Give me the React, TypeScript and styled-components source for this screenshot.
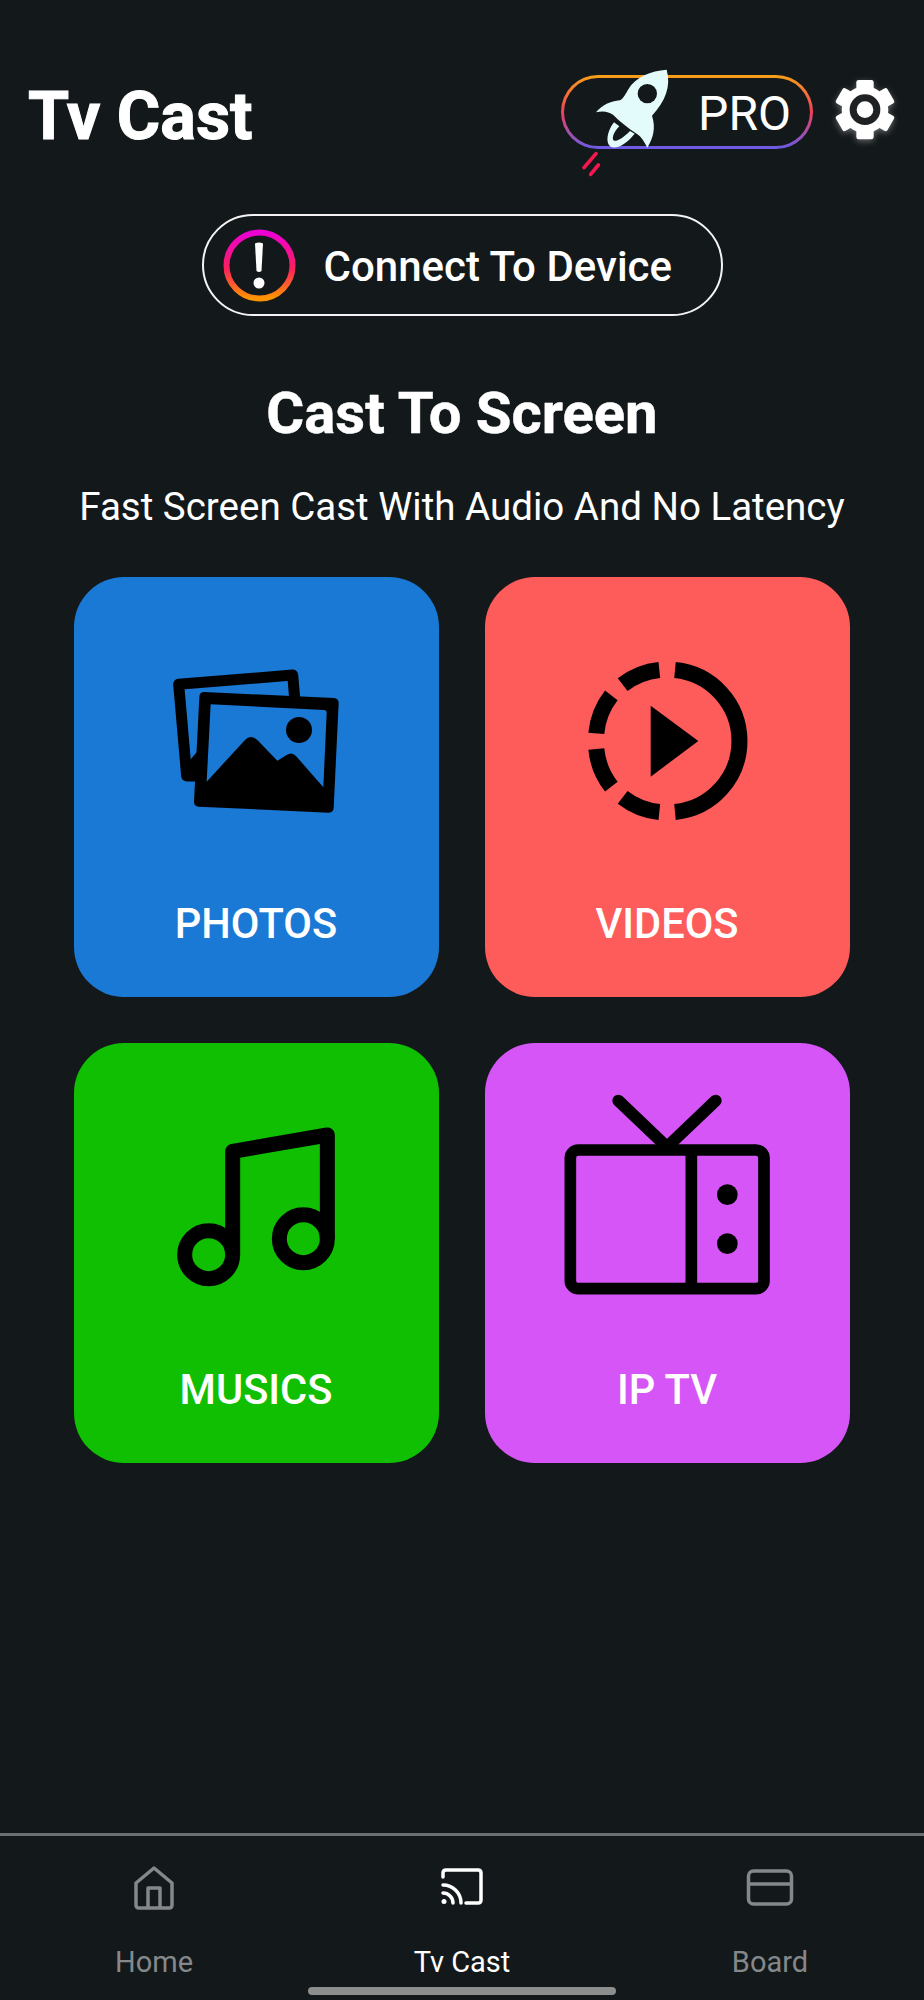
import styled, { createGlobalStyle } from 'styled-components';

const GlobalStyle = createGlobalStyle`
  html, body {
    margin: 0;
    padding: 0;
    background: #13181a;
  }
`;

const Screen = styled.div`
  display: flex;
  flex-direction: column;
  width: 924px;
  height: 2000px;
  overflow: hidden;
  background: #13181a;
  color: #fff;
  font-family: Roboto, 'Liberation Sans', sans-serif;
`;

const Header = styled.header`
  display: flex;
  align-items: flex-start;
  padding: 75px 29px 0 28px;
`;

const Title = styled.h1`
  flex: 1;
  margin: 4px 0 0;
  font-size: 66.5px;
  line-height: 74px;
  font-weight: 700;
  -webkit-text-stroke: 1px #fff;
`;

const ProPill = styled.div`
  position: relative;
  box-sizing: border-box;
  display: flex;
  align-items: center;
  justify-content: flex-end;
  width: 252px;
  height: 74px;
  padding: 2px 19px 0 0;
  border: 3px solid transparent;
  border-radius: 37px;
  background:
    linear-gradient(#13181a, #13181a) padding-box,
    linear-gradient(180deg, #f8a116 0%, #f0405c 50%, #6a5be8 100%) border-box;
  font-size: 48px;
  font-weight: 400;
`;

const RocketArt = styled.svg`
  position: absolute;
  left: 16px;
  top: -11px;
  width: 92px;
  height: 110px;
`;

const GearArt = styled.svg`
  width: 60px;
  height: 63px;
  margin: 3px 0 0 22px;
  filter: drop-shadow(0 2px 3px rgba(255, 255, 255, 0.35));
`;

const ConnectButton = styled.div`
  box-sizing: border-box;
  display: flex;
  align-items: center;
  gap: 28px;
  align-self: center;
  width: 521px;
  height: 102px;
  margin-top: 61px;
  padding-left: 19px;
  border: 2.5px solid #f4f4f4;
  border-radius: 51px;
  font-size: 42px;
  font-weight: 500;
`;

const ConnectLabel = styled.span`
  padding-top: 3px;
`;

const AlertArt = styled.svg`
  width: 73px;
  height: 73px;
`;

const Heading = styled.h2`
  margin: 64px 0 0;
  text-align: center;
  font-size: 58px;
  line-height: 66px;
  font-weight: 700;
  -webkit-text-stroke: 0.5px #fff;
`;

const Subheading = styled.p`
  margin: 38px 0 0;
  text-align: center;
  font-size: 38.5px;
  line-height: 46px;
  font-weight: 400;
`;

const CardGrid = styled.div`
  display: grid;
  grid-template-columns: repeat(2, 365px);
  grid-auto-rows: 420px;
  gap: 46px;
  justify-content: center;
  margin-top: 47px;
  padding-right: 1px;
`;

const Card = styled.div<{ $color: string }>`
  display: flex;
  flex-direction: column;
  align-items: center;
  padding-top: 44px;
  box-sizing: border-box;
  border-radius: 50px;
  background: ${({ $color }) => $color};
`;

const CardIcon = styled.svg`
  width: 240px;
  height: 240px;
`;

const CardLabel = styled.span`
  margin-top: 39px;
  font-size: 41.6px;
  line-height: 48px;
  font-weight: 500;
`;

const TabBar = styled.nav`
  margin-top: auto;
  border-top: 3px solid #6b6f70;
`;

const TabRow = styled.div`
  display: grid;
  grid-template-columns: repeat(3, 1fr);
  padding: 30px 0 0;
`;

const Tab = styled.div<{ $active?: boolean }>`
  display: flex;
  flex-direction: column;
  align-items: center;
  color: ${({ $active }) => ($active ? '#fff' : '#85888a')};
  font-size: 29px;
  line-height: 34px;
`;

const TabIcon = styled.svg`
  width: 48px;
  height: 44px;
  margin-bottom: 35px;
`;

const HomeIndicator = styled.div`
  width: 308px;
  height: 8px;
  margin: 8px auto 5px;
  border-radius: 4px;
  background: #8b8e8d;
`;

function Rocket() {
  return (
    <RocketArt viewBox="120 50 276 330">
      <path
        d="M380 58C332 62 288 78 264 118C254 136 248 146 240 150C212 152 186 164 168 186C190 180 206 184 220 194C240 214 262 232 290 250C304 258 314 276 322 292C340 262 348 232 336 196C376 152 394 108 380 58Z"
        fill="#e3fcfb"
      />
      <circle cx="322" cy="130" r="29" fill="#13181a" />
      <path
        d="M222 216C200 244 196 280 212 289C232 298 262 278 284 250L270 242C250 262 232 274 222 271C214 267 220 245 238 228Z"
        fill="#e3fcfb"
      />
      <path d="M168 310L132 352M175 344L152 372" stroke="#f5184f" strokeWidth="11" strokeLinecap="round" />
    </RocketArt>
  );
}

function Gear() {
  return (
    <GearArt viewBox="880 80 180 189">
      <circle cx="970" cy="175" r="70" fill="#fff" />
      {[0, 60, 120, 180, 240, 300].map((angle) => (
        <rect
          key={angle}
          x="944"
          y="86"
          width="52"
          height="40"
          rx="7"
          fill="#fff"
          transform={`rotate(${angle} 970 175)`}
        />
      ))}
      <circle cx="970" cy="175" r="46" fill="#1f2224" />
      <circle cx="970" cy="175" r="25" fill="#fff" />
    </GearArt>
  );
}

function AlertRing() {
  return (
    <AlertArt viewBox="0 0 73 73">
      <defs>
        <linearGradient id="alertRing" x1="0" y1="0" x2="0" y2="1">
          <stop offset="0" stopColor="#ec00d4" />
          <stop offset="0.55" stopColor="#fb1f5c" />
          <stop offset="1" stopColor="#ff9500" />
        </linearGradient>
      </defs>
      <circle cx="36.5" cy="36.5" r="33" fill="none" stroke="url(#alertRing)" strokeWidth="6" />
      <path d="M32 14.5Q36 12.5 40 14.5L38.5 42Q36 44 33.5 42Z" fill="#fff" />
      <circle cx="36" cy="54" r="5.5" fill="#fff" />
    </AlertArt>
  );
}

function PhotosIcon() {
  return (
    <CardIcon viewBox="228 153 720 720">
      <path
        d="M410 618H380L356 343L698 315L704 385"
        fill="none"
        stroke="#000"
        strokeWidth="33"
        strokeLinejoin="round"
      />
      <path d="M388 572L418 538V610L392 612Z" fill="#000" />
      <path
        fillRule="evenodd"
        d="M432 366L822 384Q836 385 836 400L821 714Q820 728 806 728L416 710Q402 709 402 695L418 380Q419 366 432 366ZM452 403L792 420Q800 420 800 428L790 652L708 558Q695 544 680 555L652 572L592 510Q572 492 555 510L440 635Z"
        fill="#000"
      />
      <circle cx="717" cy="480" r="39" fill="#000" />
    </CardIcon>
  );
}

function VideosIcon() {
  return (
    <CardIcon viewBox="232 153 720 720">
      <g fill="none" stroke="#000" strokeWidth="48">
        <path d="M616 300A214 214 0 0 1 616 726" />
        <path d="M569 300A214 214 0 0 0 459 344" />
        <path d="M425 376A214 214 0 0 0 380 490" />
        <path d="M380 537A214 214 0 0 0 425 650" />
        <path d="M459 682A214 214 0 0 0 569 726" />
      </g>
      <path d="M543 407L686 513L543 620Z" fill="#000" />
    </CardIcon>
  );
}

function MusicIcon() {
  return (
    <CardIcon viewBox="228 172 720 720">
      <g fill="none" stroke="#000" strokeWidth="45" strokeLinejoin="round">
        <circle cx="446" cy="675" r="72" />
        <circle cx="730" cy="627" r="72" />
        <path d="M518 675V365L802 316V627" />
      </g>
    </CardIcon>
  );
}

function TvIcon() {
  return (
    <CardIcon viewBox="232 172 720 720">
      <g fill="none" stroke="#000" strokeWidth="35">
        <rect x="302" y="361" width="581" height="416" rx="24" />
        <path d="M665 361V777" />
        <path d="M446 213L592 352L738 213" strokeLinecap="round" strokeWidth="36" />
      </g>
      <circle cx="773" cy="495" r="31" fill="#000" />
      <circle cx="773" cy="642" r="31" fill="#000" />
    </CardIcon>
  );
}

const cards = [
  { label: 'PHOTOS', color: '#1a79d5', icon: <PhotosIcon /> },
  { label: 'VIDEOS', color: '#fe5b5b', icon: <VideosIcon /> },
  { label: 'MUSICS', color: '#10bf02', icon: <MusicIcon /> },
  { label: 'IP TV', color: '#d655f7', icon: <TvIcon /> },
];

export default function App() {
  return (
    <Screen>
      <GlobalStyle />
      <Header>
        <Title>Tv Cast</Title>
        <ProPill>
          <Rocket />
          PRO
        </ProPill>
        <Gear />
      </Header>

      <ConnectButton>
        <AlertRing />
        <ConnectLabel>Connect To Device</ConnectLabel>
      </ConnectButton>

      <Heading>Cast To Screen</Heading>
      <Subheading>Fast Screen Cast With Audio And No Latency</Subheading>

      <CardGrid>
        {cards.map((card) => (
          <Card key={card.label} $color={card.color}>
            {card.icon}
            <CardLabel>{card.label}</CardLabel>
          </Card>
        ))}
      </CardGrid>

      <TabBar>
        <TabRow>
          <Tab>
            <TabIcon viewBox="0 0 48 44">
              <g fill="none" stroke="currentColor" strokeWidth="3.5" strokeLinejoin="round">
                <path d="M24 2L42 17V39Q42 42 39 42H9Q6 42 6 39V17Z" />
                <path d="M18 42V22H30V42" />
              </g>
            </TabIcon>
            Home
          </Tab>
          <Tab $active>
            <TabIcon viewBox="0 0 48 44">
              <g fill="none" stroke="currentColor" strokeWidth="3.5" strokeLinecap="round">
                <path d="M5 11V7Q5 4 8 4H40Q43 4 43 7V34Q43 37 40 37H28" />
                <path d="M5 19A18 18 0 0 1 23 37" />
                <path d="M5 27A10 10 0 0 1 15 37" />
              </g>
              <circle cx="6" cy="35.5" r="2.5" fill="currentColor" />
            </TabIcon>
            Tv Cast
          </Tab>
          <Tab>
            <TabIcon viewBox="0 0 48 44">
              <g fill="none" stroke="currentColor" strokeWidth="3.5">
                <rect x="2.5" y="5" width="43" height="33" rx="5" />
                <path d="M2.5 18H45.5" />
              </g>
            </TabIcon>
            Board
          </Tab>
        </TabRow>
        <HomeIndicator />
      </TabBar>
    </Screen>
  );
}
